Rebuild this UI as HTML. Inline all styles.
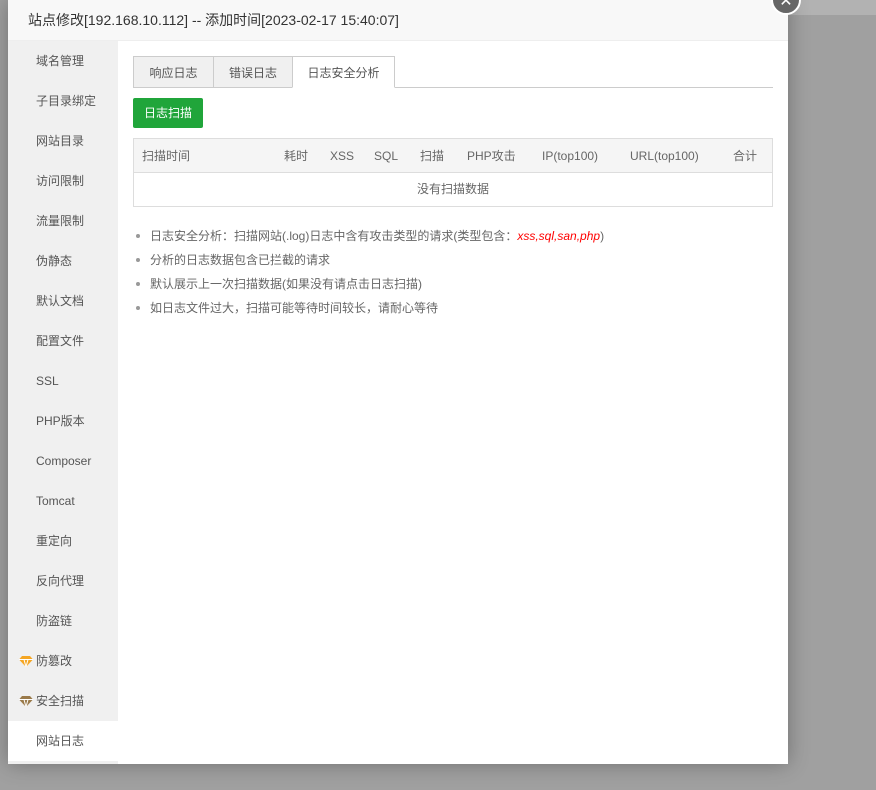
<!DOCTYPE html>
<html><head><meta charset="utf-8"><style>
*{margin:0;padding:0;box-sizing:border-box}
body{width:876px;height:790px;background:#a0a0a0;font-family:"Liberation Sans","Noto Sans CJK SC",sans-serif;position:relative;overflow:hidden;color:#555}
.topstrip{position:absolute;left:788px;top:0;width:88px;height:15px;background:#b2b2b2}
.dlg{position:absolute;left:8px;top:0;width:780px;height:764px;background:#fff;box-shadow:0 0 20px rgba(0,0,0,.3)}
.hd{height:41px;background:#f8f8f8;border-bottom:1px solid #eee;font-size:14px;color:#333;line-height:40px;padding-left:20px}
.side{position:absolute;left:0;top:41px;width:110px;height:723px;background:#f0f0f0}
.side div{height:40px;line-height:41px;padding-left:28px;font-size:12px;color:#555;position:relative}
.side div.on{background:#fff}
.side svg{position:absolute;left:11px;top:15px}
.close{position:absolute;left:763px;top:-15px;width:30px;height:30px;border-radius:50%;background:#666;border:2px solid #fff;color:#fff;font-size:16px;text-align:center;line-height:30px}
.tabs{position:absolute;left:125px;top:56px;width:640px;height:32px;border-bottom:1px solid #ccc}
.tab{position:absolute;top:0;height:32px;border:1px solid #ccc;background:#f0f0f0;font-size:12px;color:#555;line-height:33px;text-align:center}
.btn{position:absolute;left:125px;top:98px;width:70px;height:30px;background:#20a53a;color:#fff;border-radius:2px;font-size:12px;line-height:31px;text-align:center}
.tbl{position:absolute;left:125px;top:138px;width:640px;height:69px;border:1px solid #ddd;font-size:12px;color:#666}
.th{height:34px;background:#f5f5f5;border-bottom:1px solid #ddd;position:relative}
.th span{position:absolute;top:0;line-height:35px}
.td{text-align:center;line-height:33px}
ul{position:absolute;left:125px;top:226px;font-size:12px;color:#666;list-style:none}
li{height:24px;line-height:20px;padding-left:17px;position:relative}
li:before{content:"";position:absolute;left:3px;top:8px;width:4px;height:4px;border-radius:50%;background:#999}
</style></head><body>
<div class="topstrip"></div>
<div class="dlg">
<div class="hd">站点修改[192.168.10.112] -- 添加时间[2023-02-17 15:40:07]</div>
<div class="side">
<div>域名管理</div><div>子目录绑定</div><div>网站目录</div><div>访问限制</div><div>流量限制</div><div>伪静态</div><div>默认文档</div><div>配置文件</div><div>SSL</div><div>PHP版本</div><div>Composer</div><div>Tomcat</div><div>重定向</div><div>反向代理</div><div>防盗链</div>
<div><svg width="14" height="11" viewBox="0 0 14 11"><path d="M3 0h8l3 3.5L7 11 0 3.5z" fill="#f5a623"/><path d="M0 3.5h14M5 3.5L7 11l2-7.5" stroke="#fff" stroke-width="1" fill="none"/></svg>防篡改</div>
<div><svg width="14" height="11" viewBox="0 0 14 11"><path d="M3 0h8l3 3.5L7 11 0 3.5z" fill="#9a7a4a"/><path d="M0 3.5h14M5 3.5L7 11l2-7.5" stroke="#fff" stroke-width="1" fill="none"/></svg>安全扫描</div>
<div class="on">网站日志</div>
</div>
<div class="close">✕</div>
<div class="tabs">
<div class="tab" style="left:0;width:81px">响应日志</div>
<div class="tab" style="left:80px;width:80px">错误日志</div>
<div class="tab" style="left:159px;width:103px;background:#fff;border-bottom-color:#fff">日志安全分析</div>
</div>
<div class="btn">日志扫描</div>
<div class="tbl">
<div class="th"><span style="left:8px">扫描时间</span><span style="left:150px">耗时</span><span style="left:196px">XSS</span><span style="left:240px">SQL</span><span style="left:286px">扫描</span><span style="left:333px">PHP攻击</span><span style="left:408px">IP(top100)</span><span style="left:496px">URL(top100)</span><span style="left:599px">合计</span></div>
<div class="td">没有扫描数据</div>
</div>
<ul>
<li>日志安全分析：扫描网站(.log)日志中含有攻击类型的请求(类型包含：<i style="color:#f00">xss,sql,san,php</i>)</li>
<li>分析的日志数据包含已拦截的请求</li>
<li>默认展示上一次扫描数据(如果没有请点击日志扫描)</li>
<li>如日志文件过大，扫描可能等待时间较长，请耐心等待</li>
</ul>
</div>
</body></html>
